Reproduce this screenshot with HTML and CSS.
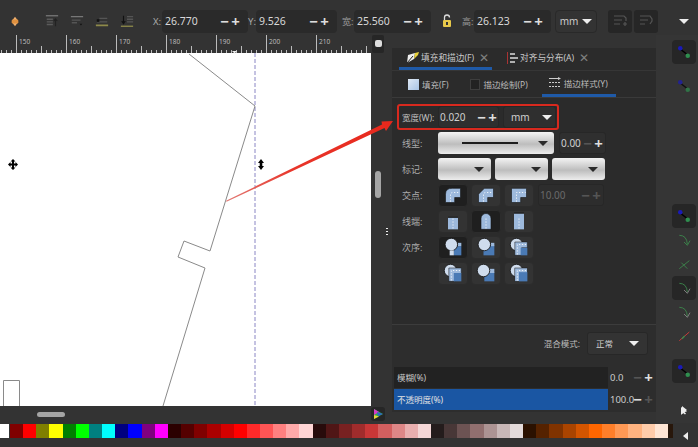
FILE: index.html
```html
<!DOCTYPE html>
<html lang="zh">
<head>
<meta charset="utf-8">
<title>填充和描边</title>
<link rel="stylesheet" href="styles.css">
</head>
<body>
<svg class="defs" width="0" height="0">
  <defs>
    <symbol id="j-round" viewBox="0 0 24 24"><path d="M3 21V11Q3 4 11 4H21V15H14V21Z" fill="#9db9dc" stroke="#111" stroke-width=".7"/><path d="M9 20V12Q9 9 12 9H20" fill="none" stroke="#fff" stroke-dasharray="1.5 2"/></symbol>
    <symbol id="j-bevel" viewBox="0 0 24 24"><path d="M3 21V11L10 4H21V15H14V21Z" fill="#9db9dc" stroke="#111" stroke-width=".7"/><path d="M9 20V12Q9 9 12 9H20" fill="none" stroke="#fff" stroke-dasharray="1.5 2"/></symbol>
    <symbol id="j-miter" viewBox="0 0 24 24"><path d="M3 21V4H21V15H14V21Z" fill="#9db9dc" stroke="#111" stroke-width=".7"/><path d="M9 20V9H20" fill="none" stroke="#fff" stroke-dasharray="1.5 2"/></symbol>
    <symbol id="c-butt" viewBox="0 0 24 24"><rect x="6" y="8" width="12" height="14" fill="#9db9dc"/><path d="M6 7.500H18" stroke="#111"/><path d="M12 9V21" stroke="#fff" stroke-dasharray="1.5 2"/></symbol>
    <symbol id="c-round" viewBox="0 0 24 24"><path d="M6 22V9A6 6 0 0 1 18 9V22Z" fill="#9db9dc" stroke="#111" stroke-width=".7"/><path d="M12 9V21" stroke="#fff" stroke-dasharray="1.500 2"/></symbol>
    <symbol id="c-square" viewBox="0 0 24 24"><rect x="6" y="3" width="12" height="19" fill="#9db9dc"/><path d="M6 2.500H18" stroke="#111"/><path d="M12 9V21" stroke="#fff" stroke-dasharray="1.500 2"/></symbol>
    <symbol id="o-a" viewBox="0 0 24 24"><rect x="13" y="11" width="9" height="11" fill="#4a7ab5"/><rect x="18" y="7" width="4" height="4" fill="#9db9dc"/><circle cx="10" cy="9" r="7.500" fill="#cfdced" stroke="#111"/><rect x="8" y="16" width="5" height="6" fill="#cfdced"/></symbol>
    <symbol id="o-b" viewBox="0 0 24 24"><rect x="9" y="10" width="13" height="12" fill="#4a7ab5"/><rect x="18" y="7" width="4" height="4" fill="#9db9dc"/><circle cx="10" cy="9" r="7.500" fill="#cfdced" stroke="#111"/></symbol>
    <symbol id="o-c" viewBox="0 0 24 24"><circle cx="9" cy="9" r="7.500" fill="#cfdced" stroke="#111"/><path d="M7 22V6H22V13H15V22Z" fill="#9db9dc" stroke="#111" stroke-width=".6"/><path d="M10 21V9H21" fill="none" stroke="#fff" stroke-dasharray="1.500 2"/><rect x="14" y="13" width="8" height="9" fill="#4a7ab5"/></symbol>
    <symbol id="o-d" viewBox="0 0 24 24"><circle cx="9" cy="9" r="7.500" fill="#cfdced" stroke="#111"/><path d="M7 22V6H22V13H15V22Z" fill="#9db9dc" stroke="#111" stroke-width=".6"/><path d="M10 21V9H21" fill="none" stroke="#fff" stroke-dasharray="1.500 2"/><rect x="13" y="12" width="9" height="10" fill="#4a7ab5"/></symbol>
    <symbol id="o-e" viewBox="0 0 24 24"><rect x="10" y="11" width="12" height="11" fill="#4a7ab5"/><rect x="16" y="7" width="6" height="5" fill="#9db9dc"/><circle cx="9" cy="9" r="7.500" fill="#cfdced" stroke="#111"/></symbol>
    <symbol id="o-f" viewBox="0 0 24 24"><circle cx="9" cy="9" r="7.500" fill="#cfdced" stroke="#111"/><rect x="7" y="6" width="15" height="16" fill="#9db9dc" stroke="#111" stroke-width=".6"/><path d="M10 21V9H21" fill="none" stroke="#fff" stroke-dasharray="1.500 2"/><rect x="12" y="11" width="10" height="11" fill="#4a7ab5"/></symbol>
    <symbol id="node" viewBox="0 0 24 24"><path d="M7 8L17 16" stroke="#000" stroke-width="2"/><circle cx="7" cy="7" r="3" fill="#1a1ab8"/><circle cx="17" cy="17" r="3" fill="#2f8f4f"/></symbol>
    <symbol id="curve-g" viewBox="0 0 24 24"><path d="M5 5Q16 5 17 18M12 15L17 20L21 13" fill="none" stroke="#3c8a4c" stroke-width="1.300"/></symbol>
    <symbol id="curve-w" viewBox="0 0 24 24"><path d="M5 5Q16 5 17 18" fill="none" stroke="#3c8a4c" stroke-width="1.300"/><path d="M12 15L17 20L21 13" fill="none" stroke="#8a8a8a" stroke-width="1.300"/></symbol>
    <symbol id="cross-g" viewBox="0 0 24 24"><path d="M5 19L20 7M8 10L17 19" fill="none" stroke="#3c8a4c" stroke-width="1.300"/></symbol>
    <symbol id="cross-r" viewBox="0 0 24 24"><path d="M5 19L20 6" fill="none" stroke="#c83a3a" stroke-width="1.500"/><path d="M9 16L13 12" stroke="#3c8a4c" stroke-width="2"/></symbol>
    <symbol id="align" viewBox="0 0 16 16"><path d="M1 2H15" stroke="#777" stroke-width="1.500"/><path d="M2 6H9M2 9H9M2 12H9" stroke="#5b5b5b" stroke-width="1.500"/><path d="M12 14V6M10 8L12 5.500L14 8" fill="none" stroke="#222" stroke-width="1.300"/></symbol>
  </defs>
</svg>

<div class="app">
  <header class="toolbar">
    <svg class="snap" width="8" height="11" viewBox="0 0 12 14"><path d="M6 0L10 5H2Z" fill="#f0b070"/><path d="M6 14L10 9H2Z" fill="#f0b070"/><rect x="1" y="4" width="10" height="6" rx="2" fill="#e0913f"/></svg>
    <div class="tb-icons">
      <svg width="14" height="14"><use href="#align"/></svg>
      <svg width="14" height="14" viewBox="0 0 16 16"><path d="M1 3H15" stroke="#777" stroke-width="1.500"/><path d="M2 7H12M2 10H8" stroke="#555" stroke-width="1.500"/><path d="M11 11H14L12.500 13Z" fill="#111"/></svg>
      <svg width="14" height="14" viewBox="0 0 16 16"><path d="M1 13H15" stroke="#8e8a4a" stroke-width="2"/><path d="M5 5H14M2 9H14" stroke="#555" stroke-width="1.500"/><path d="M2 6H5V9H2Z" fill="#111"/></svg>
      <svg width="14" height="14" viewBox="0 0 16 16"><path d="M1 14H15" stroke="#8e8a4a" stroke-width="1.500"/><path d="M8 3H15M8 6H15M8 9H15" stroke="#555" stroke-width="1.500"/><path d="M4 2V10M2 8L4 11L6 8" fill="none" stroke="#111" stroke-width="1.300"/></svg>
    </div>
    <span class="tb-label lbl-x">X:</span>
    <div class="spin spin-x"><span>26.770</span><b>−</b><b>+</b></div>
    <span class="tb-label lbl-y">Y:</span>
    <div class="spin spin-y"><span>9.526</span><b>−</b><b>+</b></div>
    <span class="tb-label lbl-w">宽:</span>
    <div class="spin spin-w"><span>25.560</span><b>−</b><b>+</b></div>
    <svg class="lock" width="10" height="14" viewBox="0 0 10 14"><path d="M2.500 6V3.500A2.500 2.500 0 0 1 7.500 3.500" fill="none" stroke="#ddd" stroke-width="1.300"/><rect x="1" y="6" width="8" height="7" rx="1" fill="#e8c94a"/><rect x="4" y="8" width="2" height="3" fill="#333"/></svg>
    <span class="tb-label lbl-h">高:</span>
    <div class="spin spin-h"><span>26.123</span><b>−</b><b>+</b></div>
    <div class="unit">mm<i class="tri"></i></div>
    <div class="tb-btns">
      <div class="tb-btn"><svg width="14" height="14" viewBox="0 0 14 14"><path d="M1 2H11L13 4V7M1 6H9M1 10H7M10 10H14M12 8V12" fill="none" stroke="#555" stroke-width="1.200"/></svg></div>
      <div class="tb-btn"><svg width="14" height="14" viewBox="0 0 14 14"><path d="M1 2H11L13 5V7L11 10M1 6H9M1 10H6" fill="none" stroke="#555" stroke-width="1.200"/></svg></div>
    </div>
    <i class="tri tb-more"></i>
  </header>

  <main class="work">
    <section class="left">
      <div class="ruler-row">
        <div class="ruler">
          <span>150</span><span>160</span><span>170</span><span>180</span><span>190</span><span>200</span><span>210</span>
        </div>
        <div class="corner"><i></i></div>
      </div>
      <div class="canvas-row">
        <div class="canvas">
          <svg class="drawing" width="371" height="353" viewBox="0 53 371 353">
            <path d="M255 53V406" stroke="#8a86c4" stroke-width="1" stroke-dasharray="4 2" fill="none"/>
            <path d="M189 54L255 106L210 251L184 241L178 257L205 268L163 406" fill="none" stroke="#8a8a8a" stroke-width="1"/>
            <path d="M3.500 406V380.500H19.500V406" fill="none" stroke="#8a8a8a" stroke-width="1"/>
            <path d="M13 159L15.500 161.500H14V163.500H15.500V162L18 164.500L15.500 167V165.500H14V167.500H15.500L13 170L10.500 167.500H12V165.500H10.500V167L8 164.500L10.500 162V163.500H12V161.500H10.500Z" fill="#000"/>
            <path d="M261 159L264 163H262.300V166H264L261 170L258 166H259.700V163H258Z" fill="#000"/>
          </svg>
        </div>
        <div class="vscroll"><i class="vthumb"></i><i class="dots"></i></div>
      </div>
      <div class="hscroll">
        <i class="hthumb"></i>
        <svg class="wheel" width="14" height="14" viewBox="0 0 14 14"><rect width="14" height="14" rx="3" fill="#262626"/><path d="M3 2L12 7L3 12Z" fill="#2fae4a"/><path d="M3 2L8 5L3 8Z" fill="#d63cc8"/><path d="M3 8L8 9.500L3 12Z" fill="#e8d23a"/><path d="M6 5L12 7L7 9Z" fill="#2f5fd0"/></svg>
      </div>
    </section>

    <section class="dock">
      <nav class="tabs">
        <div class="tab tab-on">
          <svg width="12" height="11" viewBox="0 0 12 11"><path d="M0 11L1 3L8 1L7 7Z" fill="#eee"/><path d="M8 1L12 0L11 3L7 7" fill="#e8d23a"/><path d="M0 11L6 4" stroke="#222"/></svg>
          <span>填充和描边(F)</span><em>✕</em>
        </div>
        <div class="tab">
          <svg width="11" height="12" viewBox="0 0 11 12"><path d="M.5 0V12" stroke="#a33"/><path d="M3 2H8M3 6H11M3 10H8" stroke="#ddd" stroke-width="1.600"/></svg>
          <span>对齐与分布(A)</span><em>✕</em>
        </div>
      </nav>
      <div class="inner">
        <nav class="subtabs">
          <div class="sub sub-fill"><i class="sw-fill"></i><span>填充(F)</span></div>
          <div class="sub sub-paint"><i class="sw-paint"></i><span>描边绘制(P)</span></div>
          <div class="sub sub-style">
            <svg width="12" height="11" viewBox="0 0 12 11"><path d="M0 5.500H12M0 9.500H12" stroke="#ccc" stroke-dasharray="2 1"/><path d="M0 1.500H10" stroke="#ccc"/><path d="M9 0L12 1.500L9 3Z" fill="#ccc"/></svg>
            <span>描边样式(Y)</span>
          </div>
        </nav>
        <div class="form">
          <div class="width-row">
            <span class="w-label">宽度(W):</span>
            <div class="field f-width"><span>0.020</span><b>−</b><b>+</b></div>
            <div class="field f-unit"><span>mm</span><i class="tri"></i></div>
          </div>
          <div class="row">
            <label>线型:</label>
            <div class="light l-dash"><hr><i class="tri-d"></i></div>
            <div class="field f-small"><span>0.00</span><b class="off">−</b><b>+</b></div>
          </div>
          <div class="row">
            <label>标记:</label>
            <div class="light l-mark"><i class="tri-d"></i></div>
            <div class="light l-mark"><i class="tri-d"></i></div>
            <div class="light l-mark"><i class="tri-d"></i></div>
          </div>
          <div class="row">
            <label>交点:</label>
            <div class="ic on"><svg width="20" height="20"><use href="#j-round"/></svg></div>
            <div class="ic"><svg width="20" height="20"><use href="#j-bevel"/></svg></div>
            <div class="ic"><svg width="20" height="20"><use href="#j-miter"/></svg></div>
            <div class="field f-limit"><span>10.00</span><b class="off">−</b><b class="off">+</b></div>
          </div>
          <div class="row">
            <label>线端:</label>
            <div class="ic"><svg width="20" height="20"><use href="#c-butt"/></svg></div>
            <div class="ic on"><svg width="20" height="20"><use href="#c-round"/></svg></div>
            <div class="ic"><svg width="20" height="20"><use href="#c-square"/></svg></div>
          </div>
          <div class="row">
            <label>次序:</label>
            <div class="ic on"><svg width="20" height="20"><use href="#o-a"/></svg></div>
            <div class="ic"><svg width="20" height="20"><use href="#o-b"/></svg></div>
            <div class="ic"><svg width="20" height="20"><use href="#o-c"/></svg></div>
          </div>
          <div class="row">
            <label></label>
            <div class="ic"><svg width="20" height="20"><use href="#o-d"/></svg></div>
            <div class="ic"><svg width="20" height="20"><use href="#o-e"/></svg></div>
            <div class="ic"><svg width="20" height="20"><use href="#o-f"/></svg></div>
          </div>
        </div>
      </div>
      <div class="blend">
        <span>混合模式:</span>
        <div class="field f-blend"><span>正常</span><i class="tri"></i></div>
      </div>
      <div class="slider-row">
        <div class="bar bar-blur">模糊(%)</div>
        <span class="val">0.0</span><b class="off">−</b><b>+</b>
      </div>
      <div class="slider-row">
        <div class="bar bar-op">不透明度(%)</div>
        <span class="val">100.0</span><b>−</b><b class="off">+</b>
      </div>
    </section>

    <aside class="snapbar">
      <div class="sb-btn on"><svg width="18" height="18"><use href="#node"/></svg></div>
      <div class="sb-btn sb-second"><svg width="18" height="18"><use href="#node"/></svg></div>
      <div class="sb-spacer"></div>
      <div class="sb-btn on"><svg width="18" height="18"><use href="#node"/></svg></div>
      <div class="sb-btn"><svg width="16" height="16"><use href="#curve-g"/></svg></div>
      <div class="sb-btn"><svg width="16" height="16"><use href="#cross-g"/></svg></div>
      <div class="sb-btn on"><svg width="16" height="16"><use href="#curve-w"/></svg></div>
      <div class="sb-btn"><svg width="16" height="16"><use href="#curve-w"/></svg></div>
      <div class="sb-btn"><svg width="16" height="16"><use href="#cross-r"/></svg></div>
      <div class="sb-btn on sb-last"><svg width="18" height="18"><use href="#node"/></svg></div>
      <i class="tri-r"></i>
    </aside>
  </main>

  <footer class="palette">
    <div class="swatches">
      <i class="first" style="background:#fff"></i><i class="sep"></i>
      <i style="background:#800000"></i><i style="background:#f00"></i><i style="background:#808000"></i><i style="background:#ff0"></i><i style="background:#008000"></i><i style="background:#0f0"></i><i style="background:#008080"></i><i style="background:#0ff"></i><i style="background:#000080"></i><i style="background:#00f"></i><i style="background:#800080"></i><i style="background:#f0f"></i>
      <i style="background:#2b0000"></i><i style="background:#500"></i><i style="background:#800000"></i><i style="background:#a00"></i><i style="background:#d40000"></i><i style="background:#f00"></i><i style="background:#ff2a2a"></i><i style="background:#f55"></i><i style="background:#ff8080"></i><i style="background:#faa"></i><i style="background:#ffd5d5"></i>
      <i style="background:#280b0b"></i><i style="background:#501616"></i><i style="background:#782121"></i><i style="background:#a02c2c"></i><i style="background:#c83737"></i><i style="background:#d35f5f"></i><i style="background:#de8787"></i><i style="background:#e9afaf"></i><i style="background:#f4d7d7"></i>
      <i style="background:#241c1c"></i><i style="background:#483737"></i><i style="background:#6c5353"></i><i style="background:#916f6f"></i><i style="background:#ac9393"></i><i style="background:#c8b7b7"></i><i style="background:#e3dbdb"></i>
      <i style="background:#2b1100"></i><i style="background:#520"></i><i style="background:#803300"></i><i style="background:#a40"></i><i style="background:#d45500"></i><i style="background:#f60"></i><i style="background:#ff7f2a"></i><i style="background:#f95"></i><i style="background:#ffb380"></i><i style="background:#fca"></i><i style="background:#ffe6d5"></i><i class="last" style="background:#28170b"></i>
    </div>
    <i class="tri-l"></i>
  </footer>

  <svg class="callout" width="698" height="447" viewBox="0 0 698 447">
    <defs>
      <linearGradient id="arrow" x1="226" y1="201" x2="392" y2="122" gradientUnits="userSpaceOnUse">
        <stop offset="0" stop-color="#e27a74"/><stop offset=".4" stop-color="#e8352a"/><stop offset="1" stop-color="#e8281c"/>
      </linearGradient>
    </defs>
    <path d="M226 200.800L382 124.500L381.500 121.500L393 121L386 131L384.500 128L226.500 201.800Z" fill="url(#arrow)"/>
    <path d="M232 51H237L234.500 53.500Z" fill="#eee"/>
    <path d="M681 407V415L683 413L685 414.500L686 413.500L684.500 412L687 411.500Z" fill="#eee"/>
  </svg>
</div>
</body>
</html>
```

FILE: styles.css
```css
* { box-sizing: border-box; }
html, body { margin: 0; padding: 0; }
body {
  width: 698px;
  height: 447px;
  overflow: hidden;
  background: #333;
  color: #c8c8c8;
  font-family: "Noto Sans", "Noto Sans CJK SC", sans-serif;
  font-size: 10px;
}
.defs { position: absolute; }
i, em { font-style: normal; display: block; }
b { font-weight: 400; }

.app { position: relative; width: 698px; height: 447px; display: flex; flex-direction: column; }

.tri { width: 0; height: 0; border-left: 5px solid transparent; border-right: 5px solid transparent; border-top: 5px solid #eee; flex: none; }
.tri-d { width: 0; height: 0; border-left: 5.500px solid transparent; border-right: 5.500px solid transparent; border-top: 5.500px solid #2a2a2a; flex: none; }

/* top toolbar */
.toolbar { height: 35px; flex: none; display: flex; align-items: center; background: #333; padding-top: 9px; padding-bottom: 2px; }
.snap { margin-left: 11px; flex: none; }
.tb-icons { display: flex; gap: 11px; margin-left: 26px; }
.tb-icons svg { flex: none; }
.tb-label { font-size: 9.500px; color: #aaa; flex: none; }
.lbl-x { margin-left: 19px; width: 9px; }
.lbl-y { width: 8px; }
.lbl-w { margin-left: 5px; width: 12px; font-size: 9px; color: #999; }
.lbl-h { margin-left: 10px; width: 12px; font-size: 9px; color: #999; }
.spin { height: 23px; background: #2a2a2a; border-radius: 4px; display: flex; align-items: center; padding: 0 7px 0 3px; font-size: 10.500px; color: #d8d8d8; flex: none; }
.spin span { flex: 1; }
.spin b { font-size: 15px; line-height: 15px; font-weight: 700; width: 11px; text-align: center; color: #ddd; }
.spin-x { width: 86px; }
.spin-y { width: 81px; }
.spin-w { width: 77px; }
.spin-h { width: 77px; }
.lock { margin-left: 11px; flex: none; }
.unit { width: 42px; height: 23px; margin-left: 4px; background: #333; border: 1px solid #292929; border-radius: 4px; display: flex; align-items: center; justify-content: center; gap: 4px; font-size: 10px; color: #ccc; flex: none; }
.tb-btns { display: flex; gap: 2px; margin-left: 11px; flex: none; }
.tb-btn { width: 24px; height: 23px; background: #262626; border-radius: 3px; display: flex; align-items: center; justify-content: center; }
.tb-more { margin-left: 21px; }

/* work area */
.work { height: 388px; flex: none; display: flex; }
.left { width: 392px; flex: none; display: flex; flex-direction: column; }
.ruler-row { height: 18px; display: flex; flex: none; }
.ruler {
  width: 371px; height: 18px; padding-left: 16px; display: flex; overflow: hidden;
  background-color: #333;
  background-image:
    repeating-linear-gradient(90deg, #bbb 0 1px, transparent 1px 5px),
    repeating-linear-gradient(90deg, #bbb 0 1px, transparent 1px 25px);
  background-size: 100% 3px, 100% 7px;
  background-position: 1px bottom, 16px bottom;
  background-repeat: no-repeat;
}
.ruler span { width: 50px; flex: none; border-left: 1px solid #bbb; height: 18px; padding-left: 2px; font-size: 6.500px; line-height: 13px; color: #bbb; }
.corner { width: 12px; height: 18px; margin-left: 1px; background: #262626; border-radius: 2px; display: flex; align-items: center; justify-content: center; padding-bottom: 2px; }
.corner i { width: 7px; height: 7px; background: #ddd; border-radius: 2px; }
.canvas-row { height: 353px; display: flex; flex: none; }
.canvas { width: 371px; height: 353px; background: #fff; flex: none; overflow: hidden; }
.drawing { display: block; }
.vscroll { width: 21px; background: #333; position: relative; flex: none; }
.vthumb { position: absolute; left: 4px; top: 118px; width: 6px; height: 27px; border-radius: 3px; background: #a5a5a5; }
.dots { position: absolute; left: 15px; top: 175px; width: 2px; height: 7px; background: repeating-linear-gradient(180deg, #eee 0 1.500px, transparent 1.500px 3px); }
.hscroll { height: 17px; position: relative; background: #333; flex: none; }
.hthumb { position: absolute; left: 37px; top: 6px; width: 28px; height: 5px; border-radius: 3px; background: #a5a5a5; }
.wheel { position: absolute; left: 371px; top: 1px; }

/* dock */
.dock { width: 264px; height: 364px; margin-top: 13px; flex: none; display: flex; flex-direction: column; background: #2d2d2d; }
.tabs { height: 22px; display: flex; flex: none; background: #2b2b2b; }
.tab { display: flex; align-items: center; gap: 2px; height: 22px; font-size: 8.700px; color: #c8c8c8; padding-bottom: 3px; white-space: nowrap; }
.tab svg { flex: none; }
.tab-on { width: 93px; margin-left: 7px; padding-left: 8px; border-bottom: 3px solid #1f5aa8; padding-bottom: 0; }
.tab:not(.tab-on) { margin-left: 15px; }
.tab em { margin-left: 3px; color: #808080; font-size: 12px; line-height: 12px; }
.inner { height: 255px; flex: none; background: #2b2b2b; border-top: 1px solid #363636; border-bottom: 1px solid #3c3c3c; display: flex; flex-direction: column; }
.subtabs { height: 27px; display: flex; flex: none; align-items: stretch; border-bottom: 1px solid #3a3a3a; }
.sub { display: flex; align-items: center; gap: 3px; font-size: 8.500px; color: #bbb; white-space: nowrap; }
.sub-fill { margin-left: 16px; gap: 3px; }
.sub-paint { margin-left: 21px; gap: 4px; }
.sub-style { margin-left: 14px; width: 74px; padding-left: 7px; border-bottom: 3px solid #1f5aa8; }
.sw-fill { width: 11px; height: 11px; background: linear-gradient(135deg, #dfe9f5, #a8c4e4); }
.sw-paint { width: 10px; height: 11px; background: #222; border: 1px solid #3e3e3e; }
.form { display: flex; flex-direction: column; padding-top: 6px; }
.width-row { width: 162px; height: 26px; margin-left: 5px; display: flex; align-items: center; gap: 4px; border: 2px solid #d8291e; border-radius: 3px; padding-left: 3px; }
.w-label { width: 35px; flex: none; font-size: 8.500px; white-space: nowrap; color: #c0c0c0; }
.field { height: 22px; background: #2f2f2f; border: 1px solid #272727; border-radius: 3px; display: flex; align-items: center; font-size: 10px; color: #d0d0d0; flex: none; }
.field span { flex: 1; padding-left: 1px; }
.field b, .slider-row b { font-size: 15px; line-height: 15px; font-weight: 700; width: 11px; text-align: center; color: #ddd; flex: none; }
b.off, .field b.off, .slider-row b.off { color: #555; }
.f-width { width: 61px; margin-left: -3px; }
.f-unit { width: 53px; padding-right: 3px; }
.f-unit span { padding-left: 7px; }
.row { height: 26px; display: flex; align-items: center; gap: 4px; padding-left: 10px; flex: none; }
.row label { width: 32px; flex: none; color: #aaa; font-size: 9px; }
.light { height: 22px; border-radius: 3px; background: linear-gradient(#f4f4f4, #bdbdbd 55%, #ededed); display: flex; align-items: center; flex: none; position: relative; }
.l-dash { width: 116px; justify-content: flex-end; padding-right: 6px; }
.l-dash hr { width: 56px; height: 2px; margin: 0; border: 0; background: #1d1d1d; position: absolute; left: 24px; top: 10px; }
.l-mark { width: 53px; justify-content: flex-end; padding-right: 7px; }
.f-small { width: 47px; margin-left: 1px; padding-right: 1px; }
.ic { width: 30px; height: 23px; background: #333; border: 1px solid #2c2c2c; border-radius: 4px; display: flex; align-items: center; justify-content: center; flex: none; margin-right: -1px; }
.ic.on { background: #1f1f1f; }
.f-limit { width: 66px; margin-left: 1px; padding-right: 1px; color: #6a6a6a; background: #2d2d2d; }
.blend { height: 41px; display: flex; align-items: center; justify-content: flex-end; gap: 7px; padding: 0 8px 5px 0; flex: none; color: #bbb; font-size: 8.500px; }
.f-blend { width: 61px; height: 23px; background: #333; padding-right: 8px; font-size: 8.500px; }
.f-blend span { padding-left: 8px; }
.slider-row { height: 22px; display: flex; align-items: center; flex: none; font-size: 8.500px; }
.bar { width: 214px; height: 21px; margin-left: 2px; display: flex; align-items: center; padding-left: 3px; flex: none; color: #c8c8c8; }
.bar-blur { background: #222; }
.bar-op { background: #1a56a3; color: #e4e4e4; }
.val { width: 22px; margin-left: 2px; flex: none; color: #ccc; font-size: 9.500px; white-space: nowrap; }

/* right snap bar */
.snapbar { width: 42px; flex: none; display: flex; flex-direction: column; align-items: center; padding: 5px 0 0 14px; background: #353535; }
.sb-btn { width: 24px; height: 24px; flex: none; display: flex; align-items: center; justify-content: center; border-radius: 4px; }
.sb-btn.on { background: #262626; }
.sb-second { margin-top: 10px; opacity: .7; }
.sb-spacer { height: 106px; flex: none; }
.sb-last { margin-top: 11px; }
.tri-r { width: 0; height: 0; border-top: 4px solid transparent; border-bottom: 4px solid transparent; border-left: 5px solid #eee; margin-top: 23px; flex: none; }

/* palette */
.palette { height: 24px; flex: none; position: relative; background: #333; padding-top: 1px; }
.swatches { display: flex; height: 14px; overflow: hidden; }
.swatches i { width: 13.160px; height: 14px; flex: none; }
.swatches .first { width: 9px; }
.swatches .sep { width: 1px; background: #333; }
.swatches .last { width: 5px; }
.tri-l { position: absolute; right: 10px; top: 9px; width: 0; height: 0; border-top: 4px solid transparent; border-bottom: 4px solid transparent; border-right: 5px solid #eee; }

.callout { position: absolute; left: 0; top: 0; pointer-events: none; }
```
